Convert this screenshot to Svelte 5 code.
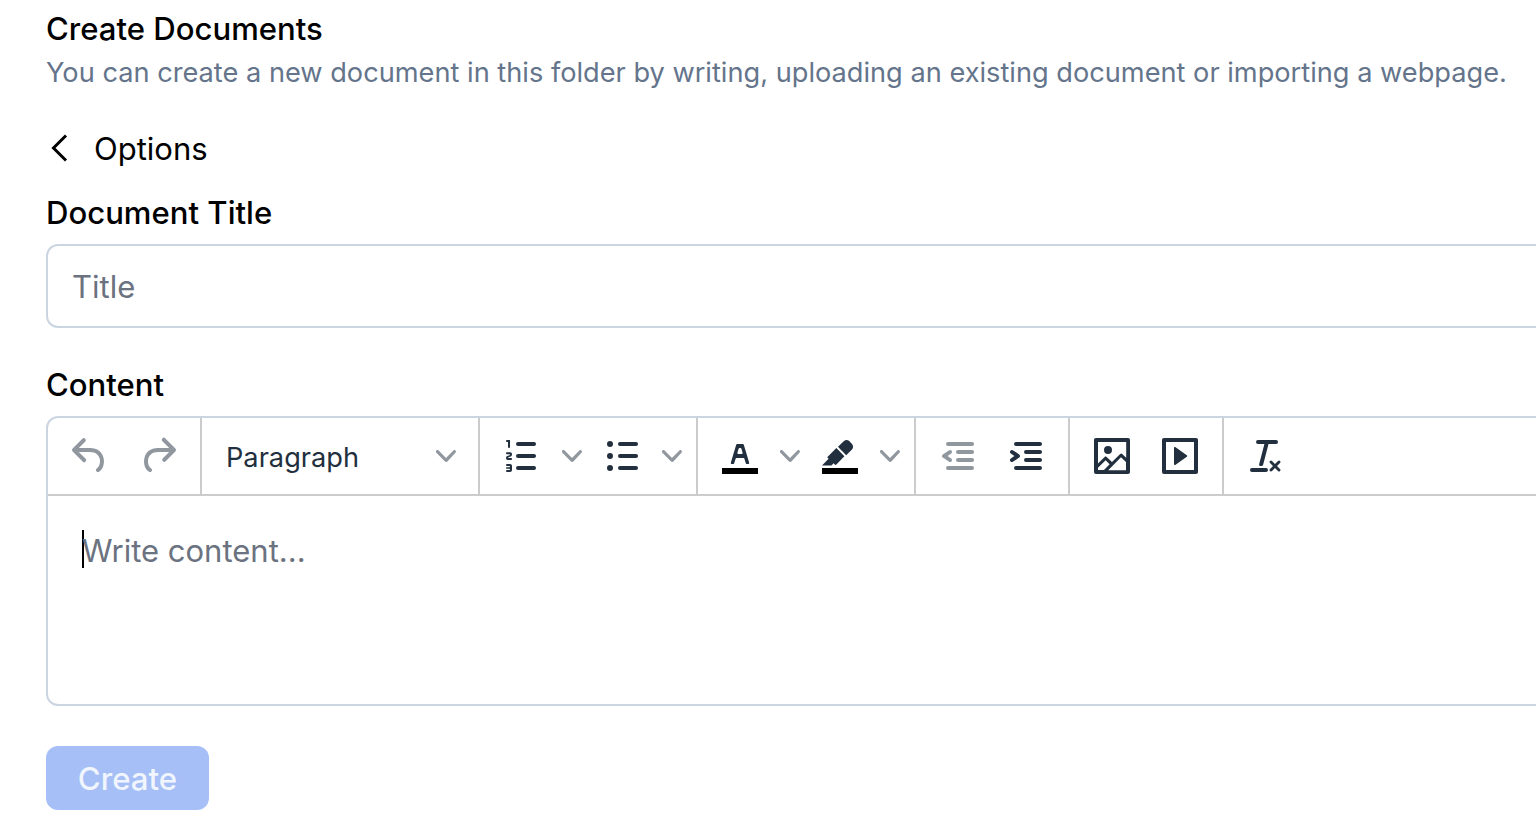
<script>
  const chevron = "M8.7 2.2c.3-.3.8-.3 1 0 .4.4.4.9 0 1.2L5.7 7.8c-.3.3-.9.3-1.2 0L.2 3.4a.8.8 0 0 1 0-1.2c.3-.3.8-.3 1.1 0L5 6l3.7-3.8Z";

  // toolbar icons, 24x24 grid
  const icons = {
    undo: "M6.4 8H12c3.7 0 6.2 2 6.8 5.1.6 2.7-.4 5.6-2.3 6.8a1 1 0 0 1-1-1.8c1.1-.6 1.8-2.7 1.4-4.6-.5-2.1-2.1-3.5-4.9-3.5H6.4l3.3 3.3a1 1 0 1 1-1.4 1.4l-5-5a1 1 0 0 1 0-1.4l5-5a1 1 0 0 1 1.4 1.4L6.4 8Z",
    redo: "M17.6 10H12c-2.8 0-4.4 1.4-4.9 3.5-.4 2 .3 4 1.4 4.6a1 1 0 1 1-1 1.8c-2-1.2-2.9-4.1-2.3-6.8.6-3 3-5.1 6.8-5.1h5.6l-3.3-3.3a1 1 0 1 1 1.4-1.4l5 5a1 1 0 0 1 0 1.4l-5 5a1 1 0 0 1-1.4-1.4l3.3-3.3Z",
    num: "M10 17h8c.6 0 1 .4 1 1s-.4 1-1 1h-8a1 1 0 0 1 0-2Zm0-6h8c.6 0 1 .4 1 1s-.4 1-1 1h-8a1 1 0 0 1 0-2Zm0-6h8c.6 0 1 .4 1 1s-.4 1-1 1h-8a1 1 0 1 1 0-2ZM6 4v3.5c0 .3-.2.5-.5.5a.5.5 0 0 1-.5-.5V5h-.5a.5.5 0 0 1 0-1H6Zm-1 8.8.2.2h1.3c.3 0 .5.2.5.5s-.2.5-.5.5H4.9a.9.9 0 0 1-.9-.9V13c0-.4.3-.8.6-1l1.2-.4.2-.3a.2.2 0 0 0-.2-.2H4.5a.5.5 0 0 1-.5-.5c0-.3.2-.5.5-.5h1.6c.5 0 .9.4.9 1v.1c0 .4-.3.8-.6 1l-1.2.4-.2.3ZM7 17v2c0 .6-.4 1-1 1H4.5a.5.5 0 0 1 0-1h1.2c.2 0 .3-.1.3-.3 0-.2-.1-.3-.3-.3H4.4a.4.4 0 1 1 0-.8h1.3c.2 0 .3-.1.3-.3 0-.2-.1-.3-.3-.3H4.5a.5.5 0 1 1 0-1H6c.6 0 1 .4 1 1Z",
    bull: "M11 5h8c.6 0 1 .4 1 1s-.4 1-1 1h-8a1 1 0 0 1 0-2Zm0 6h8c.6 0 1 .4 1 1s-.4 1-1 1h-8a1 1 0 0 1 0-2Zm0 6h8c.6 0 1 .4 1 1s-.4 1-1 1h-8a1 1 0 0 1 0-2ZM4.5 6a1.5 1.5 0 1 1 3 0 1.5 1.5 0 0 1-3 0Zm0 6a1.5 1.5 0 1 1 3 0 1.5 1.5 0 0 1-3 0Zm0 6a1.5 1.5 0 1 1 3 0 1.5 1.5 0 0 1-3 0Z",
    letter: "M8.7 16h-.8a.5.5 0 0 1-.5-.6l2.7-9c.1-.3.3-.4.5-.4h2.8c.2 0 .4.1.5.4l2.7 9a.5.5 0 0 1-.5.6h-.8a.5.5 0 0 1-.4-.4l-.7-2.2c0-.3-.3-.4-.5-.4h-3.4c-.2 0-.4.1-.5.4l-.7 2.2c0 .3-.2.4-.4.4Zm2.6-7.6-.6 2a.5.5 0 0 0 .5.6h1.6a.5.5 0 0 0 .5-.6l-.6-2c0-.3-.3-.4-.5-.4h-.4c-.2 0-.4.1-.5.4Z",
    marker: "M7.7 16.7H3l3.3-3.3-.7-.8L10.2 8l4 4.1-4 4.2c-.2.2-.6.2-.8 0l-.6-.7-1.1 1.1Zm5-7.5L11 7.4l3-2.9a2 2 0 0 1 2.6 0L18 6c.7.7.7 2 0 2.7l-2.9 2.9-1.8-1.8-.5-.6",
    outdent: "M7 5h12c.6 0 1 .4 1 1s-.4 1-1 1H7a1 1 0 1 1 0-2Zm5 4h7c.6 0 1 .4 1 1s-.4 1-1 1h-7a1 1 0 0 1 0-2Zm0 4h7c.6 0 1 .4 1 1s-.4 1-1 1h-7a1 1 0 0 1 0-2Zm-5 4h12a1 1 0 0 1 0 2H7a1 1 0 0 1 0-2Zm1.6-3.8a1 1 0 0 1-1.2 1.6l-3-2a1 1 0 0 1 0-1.6l3-2a1 1 0 0 1 1.2 1.6L6.8 12l1.8 1.2Z",
    indent: "M7 5h12c.6 0 1 .4 1 1s-.4 1-1 1H7a1 1 0 1 1 0-2Zm5 4h7c.6 0 1 .4 1 1s-.4 1-1 1h-7a1 1 0 0 1 0-2Zm0 4h7c.6 0 1 .4 1 1s-.4 1-1 1h-7a1 1 0 0 1 0-2Zm-5 4h12a1 1 0 0 1 0 2H7a1 1 0 0 1 0-2Zm-2.6-3.8L6.2 12l-1.8-1.2a1 1 0 0 1 1.2-1.6l3 2a1 1 0 0 1 0 1.6l-3 2a1 1 0 1 1-1.2-1.6Z",
    image: "m5 15.7 3.3-3.2c.3-.3.7-.3 1 0L12 15l4.1-4c.3-.4.8-.4 1 0l2 1.9V5H5v10.7ZM5 18v1h3l2.8-2.9-2-2L5 17.9Zm14-3-2.5-2.4-6.4 6.5H19v-4ZM4 3h16c.6 0 1 .4 1 1v16c0 .6-.4 1-1 1H4a1 1 0 0 1-1-1V4c0-.6.4-1 1-1Zm6 8a2 2 0 1 0 0-4 2 2 0 0 0 0 4Z",
    media: "M4 3h16c.6 0 1 .4 1 1v16c0 .6-.4 1-1 1H4a1 1 0 0 1-1-1V4c0-.6.4-1 1-1Zm1 2v14h14V5H5Zm4.8 2.6 5.6 4a.5.5 0 0 1 0 .8l-5.6 4A.5.5 0 0 1 9 16V8a.5.5 0 0 1 .8-.4Z",
    clear: "M13.2 6a1 1 0 0 1 0 .2l-2.6 10a1 1 0 0 1-1 .8h-.2a.8.8 0 0 1-.8-1l2.6-10H8a1 1 0 1 1 0-2h9a1 1 0 0 1 0 2h-3.8ZM5 18h7a1 1 0 0 1 0 2H5a1 1 0 0 1 0-2Zm13 1.5L16.5 18 15 19.5a.7.7 0 0 1-1-1l1.5-1.5-1.5-1.5a.7.7 0 0 1 1-1l1.5 1.5 1.5-1.5a.7.7 0 0 1 1 1L17.5 17l1.5 1.5a.7.7 0 0 1-1 1Z"
  };

  let title = "";
</script>

{#snippet icon(name, off = false)}
  <button class="tool" class:off type="button" aria-label={name}>
    <svg width="48" height="48" viewBox="0 0 24 24"><path fill-rule="evenodd" d={icons[name]} /></svg>
  </button>
{/snippet}

{#snippet caret()}
  <svg class="chev" width="20" height="20" viewBox="0 0 10 10"><path d={chevron} /></svg>
{/snippet}

{#snippet split(name, swatch = false)}
  <div class="split">
    <button class="tool" type="button" aria-label={name}>
      <svg width="48" height="48" viewBox="0 0 24 24">
        {#if swatch}<path class="swatch" d="M3 18h18v3H3z" />{/if}
        <path fill-rule={swatch ? "nonzero" : "evenodd"} d={icons[name]} />
      </svg>
    </button>
    <button class="arrow" type="button" aria-label="more">{@render caret()}</button>
  </div>
{/snippet}

<main class="page">
  <h1>Create Documents</h1>
  <p class="lead">You can create a new document in this folder by writing, uploading an existing document or importing a webpage.</p>

  <div class="back">
    <svg width="28" height="32" viewBox="0 0 28 32"><path d="M20 3.5 7.5 16 20 28.5" /></svg>
    <span>Options</span>
  </div>

  <label class="field-label" for="doc-title">Document Title</label>
  <input id="doc-title" class="title-input" placeholder="Title" bind:value={title} />

  <div class="field-label content-label">Content</div>
  <div class="editor">
    <div class="toolbar">
      <div class="group">
        {@render icon("undo", true)}
        {@render icon("redo", true)}
      </div>
      <div class="group">
        <button class="select" type="button"><span>Paragraph</span>{@render caret()}</button>
      </div>
      <div class="group">
        {@render split("num")}
        {@render split("bull")}
      </div>
      <div class="group">
        {@render split("letter", true)}
        {@render split("marker", true)}
      </div>
      <div class="group">
        {@render icon("outdent", true)}
        {@render icon("indent")}
      </div>
      <div class="group">
        {@render icon("image")}
        {@render icon("media")}
      </div>
      <div class="group last">
        {@render icon("clear")}
      </div>
    </div>
    <div class="body">
      <span class="cursor"></span>
      <span class="placeholder">Write content...</span>
    </div>
  </div>

  <button class="create" type="button" disabled><span>Create</span></button>
</main>

<style>
  :global(body) {
    background: #fff;
    overflow: hidden;
  }

  .page {
    width: 1640px;
    height: 824px;
    padding: 9px 0 0 46px;
    box-sizing: border-box;
    font-family: Inter, "Noto Sans", sans-serif;
    color: #000;
    overflow: hidden;
  }

  h1 {
    margin: 0;
    font-size: 31.1px;
    line-height: 40px;
    font-weight: 500;
  }

  .lead {
    margin: 4px 0 0;
    font-size: 27.2px;
    line-height: 40px;
    color: #64748b;
  }

  .back {
    display: flex;
    align-items: center;
    gap: 20px;
    margin-top: 35px;
    height: 40px;
    font-size: 31px;
  }

  .back svg {
    fill: none;
    stroke: #000;
    stroke-width: 3;
  }

  .field-label {
    display: block;
    margin-top: 25px;
    font-size: 31.1px;
    line-height: 40px;
    font-weight: 500;
  }

  .title-input {
    display: block;
    box-sizing: border-box;
    width: 100%;
    height: 84px;
    margin-top: 11px;
    padding: 0 24px;
    border: 2px solid #cbd5e1;
    border-radius: 12px;
    outline: none;
    font: inherit;
    font-size: 31px;
    color: #000;
  }

  .title-input::placeholder {
    color: #6b7280;
    opacity: 1;
  }

  .content-label {
    margin-top: 37px;
  }

  .editor {
    box-sizing: border-box;
    height: 290px;
    margin-top: 11px;
    border: 2px solid #cbd5e1;
    border-radius: 12px;
    overflow: hidden;
  }

  .toolbar {
    display: flex;
    height: 78px;
    box-sizing: border-box;
    border-bottom: 2px solid #cccccc;
  }

  .group {
    display: flex;
    align-items: center;
    padding: 0 8px;
    border-right: 2px solid #cccccc;
  }

  .group.last {
    border-right: none;
  }

  button {
    font: inherit;
    background: none;
    border: none;
    padding: 0;
  }

  .tool {
    display: flex;
    width: 68px;
    height: 68px;
    align-items: center;
    justify-content: center;
    fill: #222f3e;
  }

  .tool.off {
    fill: rgba(34, 47, 62, 0.5);
  }

  .swatch {
    fill: #000;
  }

  .split {
    display: flex;
    align-items: center;
  }

  .arrow {
    display: flex;
    width: 32px;
    height: 68px;
    align-items: center;
    justify-content: center;
  }

  .chev {
    fill: rgba(34, 47, 62, 0.5);
  }

  .select {
    display: flex;
    box-sizing: border-box;
    width: 260px;
    height: 68px;
    padding: 2px 14px 0 16px;
    align-items: center;
    justify-content: space-between;
    font-size: 27.2px;
    color: #222f3e;
  }

  .select .chev {
    margin-top: -2px;
  }

  .body {
    display: flex;
    align-items: flex-start;
    padding: 33px 0 0 34px;
  }

  .cursor {
    width: 2px;
    height: 38px;
    margin-top: 1px;
    margin-right: -2px;
    background: #000;
  }

  .placeholder {
    font-size: 31px;
    line-height: 44px;
    color: #6b7280;
  }

  .create {
    display: flex;
    width: 163px;
    height: 64px;
    margin-top: 40px;
    padding-top: 1px;
    box-sizing: border-box;
    align-items: center;
    justify-content: center;
    border-radius: 12px;
    background: #a6bff6;
    font-size: 31.2px;
    font-weight: 500;
    color: rgba(255, 255, 255, 0.85);
  }
</style>
